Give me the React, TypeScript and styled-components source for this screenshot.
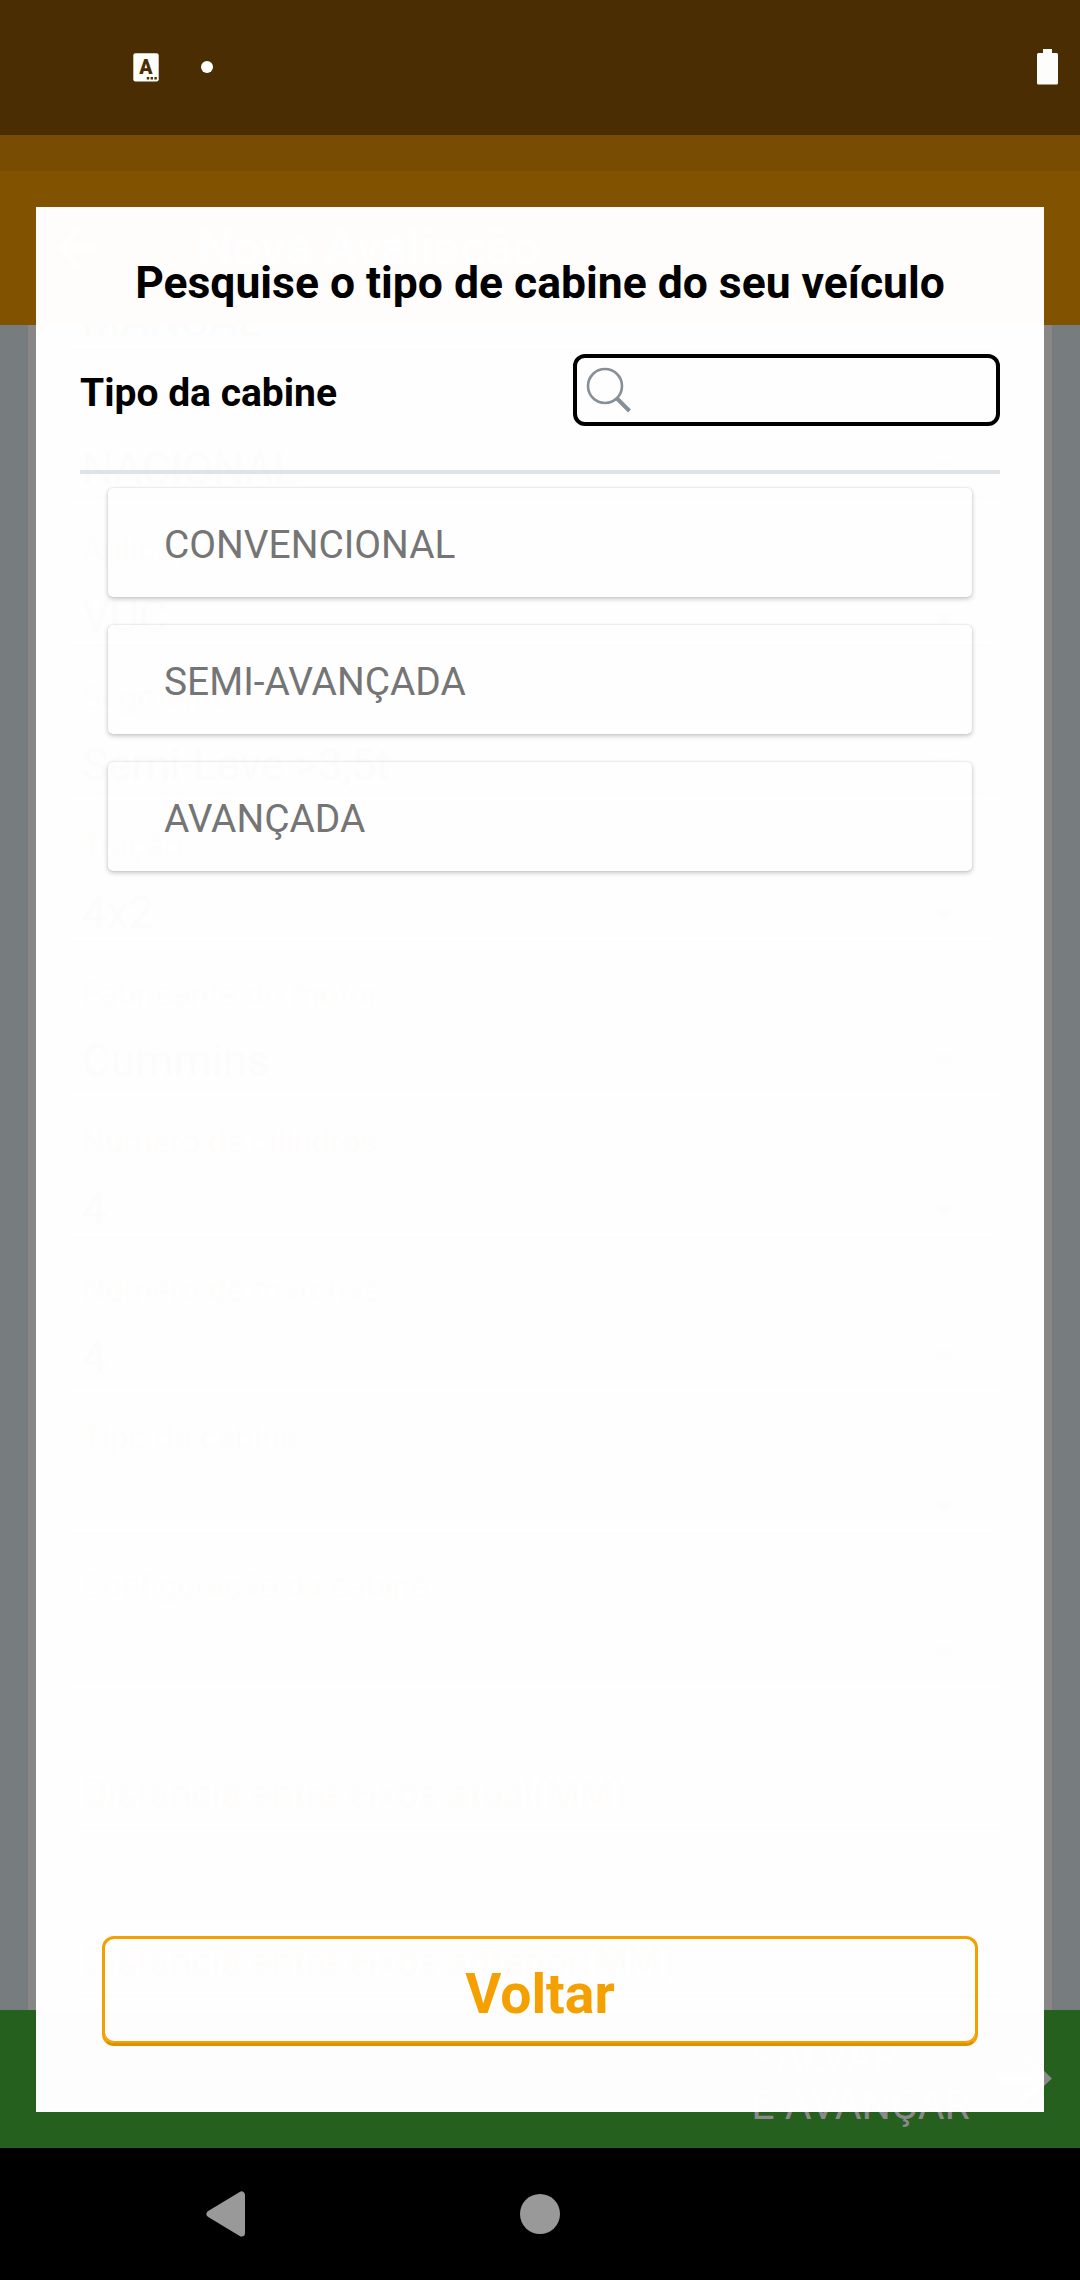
import React from 'react';
import styled, { createGlobalStyle } from 'styled-components';

const GlobalStyle = createGlobalStyle`
  *, *::before, *::after { box-sizing: border-box; }
  body { margin: 0; background: #000; font-family: Roboto, "Liberation Sans", sans-serif; }
`;

const Screen = styled.div`
  position: relative;
  width: 1080px;
  height: 2280px;
  overflow: hidden;
  display: flex;
  flex-direction: column;
  background: #777c7f;
`;

const StatusBar = styled.header`
  height: 135px;
  flex: none;
  display: flex;
  align-items: center;
  padding: 0 22px 1px 133px;
  background: #4a2d03;
`;

const StatusDot = styled.span`
  width: 12px;
  height: 12px;
  margin: 0 auto 0 42px;
  border-radius: 50%;
  background: #fff;
`;

const ToolbarEdge = styled.div`
  height: 36px;
  flex: none;
  background: #784c03;
`;

const Toolbar = styled.div`
  height: 154px;
  flex: none;
  display: flex;
  align-items: center;
  gap: 98px;
  padding: 0 0 0 54px;
  background: #815300;
  color: #8a8a8a;
`;

const ToolbarTitle = styled.div`
  font-size: 49.5px;
  line-height: 56px;
  font-weight: 700;
`;

const FormCard = styled.div`
  flex: 1;
  min-height: 0;
  margin: 0 28px;
  padding: 0 55px 0 42px;
  overflow: hidden;
  background: #888786;
`;

const FormRow = styled.div<{ $height: number }>`
  height: ${p => p.$height}px;
  display: flex;
  flex-direction: column;
  justify-content: flex-end;
  overflow: hidden;
  padding: 0 40px 1px 12px;
  border-bottom: 3px solid #5f5f5f;
`;

const FormLabel = styled.div`
  font-size: 33px;
  line-height: 39px;
  margin-bottom: 22px;
  color: #8c6c35;
`;

const FormValue = styled.div`
  height: 52px;
  flex: none;
  display: flex;
  align-items: center;
  justify-content: space-between;
  font-size: 44px;
  line-height: 52px;
  color: #000;
`;

const MeasureRow = styled.div<{ $height: number }>`
  height: ${p => p.$height}px;
  display: flex;
  align-items: flex-end;
  margin: 0 -3px 0 11px;
  padding: 0 0 10px 1px;
  border-bottom: 3px solid #707070;
  font-size: 38.5px;
  line-height: 45px;
  color: #8c6c35;
`;

const NextBar = styled.div`
  height: 138px;
  flex: none;
  display: flex;
  align-items: center;
  justify-content: flex-end;
  gap: 27px;
  padding: 0 28px 0 0;
  background: #26601f;
  color: #8a8a8a;

  svg { margin-top: -2px; }
`;

const NextText = styled.div`
  font-size: 41.2px;
  line-height: 48px;
  padding-top: 4px;
`;

const NavBar = styled.nav`
  height: 132px;
  flex: none;
  display: flex;
  align-items: center;
  padding: 0 0 0 206px;
  background: #000;
`;

const HomeKey = styled.span`
  width: 40px;
  height: 40px;
  margin-left: 275px;
  border-radius: 50%;
  background: #999;
`;

const Dialog = styled.section`
  position: absolute;
  inset: 207px 36px 168px;
  display: flex;
  flex-direction: column;
  padding: 50px 44px 66px;
  background: rgba(255, 255, 255, 0.988);
`;

const Title = styled.h1`
  margin: 0 0 45px;
  font-size: 44.45px;
  line-height: 52px;
  font-weight: 700;
  text-align: center;
  white-space: nowrap;
  color: #000;
`;

const SearchRow = styled.div`
  height: 72px;
  display: flex;
  align-items: center;
  justify-content: space-between;
`;

const SearchLabel = styled.label`
  padding-top: 7px;
  font-size: 39px;
  line-height: 45px;
  font-weight: 700;
  color: #000;
`;

const SearchBox = styled.div`
  width: 427px;
  height: 72px;
  display: flex;
  align-items: center;
  padding: 0 10px 0 9px;
  border: 4px solid #000;
  border-radius: 12px;
`;

const Divider = styled.hr`
  width: 100%;
  height: 4px;
  margin: 44px 0 14px;
  border: 0;
  background: #dfe3e6;
`;

const Options = styled.ul`
  flex: 1;
  margin: 0;
  padding: 0 28px;
  display: flex;
  flex-direction: column;
  gap: 28px;
  list-style: none;
`;

const Option = styled.li`
  height: 109px;
  display: flex;
  align-items: center;
  padding: 4px 56px 0;
  border-radius: 5px;
  box-shadow: 0 2px 5px rgba(0, 0, 0, 0.22), 0 0 2px rgba(0, 0, 0, 0.12);
  font-size: 38.9px;
  line-height: 45px;
  color: #757575;
`;

const BackButton = styled.button`
  height: 110px;
  margin: 0 22px;
  padding: 7px 0 0;
  display: flex;
  align-items: center;
  justify-content: center;
  border: 3px solid #f4a000;
  border-bottom-color: #de9100;
  border-radius: 12px;
  box-shadow: inset 0 -2px 0 #f4a000;
  background: transparent;
  font-family: inherit;
  font-size: 55.3px;
  line-height: 64px;
  font-weight: 700;
  color: #f4a000;
`;

const rows = [
  { label: 'Procedência', value: 'NACIONAL' },
  { label: 'Aplicação', value: 'VUC' },
  { label: 'Segmento', value: 'Semi-Leve >3,5t' },
  { label: 'Tração', value: '4x2' },
  { label: 'Fabricante do motor', value: 'Cummins' },
  { label: 'Número de cilindros', value: '4' },
  { label: 'Número de marchas', value: '4' },
  { label: 'Tipo da cabine', value: '' },
  { label: 'Configuração da cabine', value: '' },
];

const options = ['CONVENCIONAL', 'SEMI-AVANÇADA', 'AVANÇADA'];

const KeyboardIcon = () => (
  <svg width="26" height="29" viewBox="0 0 26 29">
    <rect x="0.3" y="0.3" width="25.4" height="28.2" rx="2.2" fill="#fdfdfb" />
    <text x="13" y="20.6" textAnchor="middle" fontFamily="Roboto" fontWeight="900" fontSize="19.5" fill="#4a2d03">A</text>
    <path d="M13.8 24h2.4v2.4h-2.4zM17.6 24H20v2.4h-2.4zM21.4 24h2.4v2.4h-2.4z" fill="#4a2d03" />
  </svg>
);

const BatteryIcon = () => (
  <svg width="21" height="36" viewBox="0 0 21 36">
    <path d="M6 0h9v4h4.5A1.5 1.5 0 0 1 21 5.500V34a1.500 1.500 0 0 1-1.500 1.500h-18A1.500 1.500 0 0 1 0 34V5.500A1.500 1.500 0 0 1 1.500 4H6z" fill="#fdfdfb" />
  </svg>
);

const ArrowLeft = () => (
  <svg width="46" height="46" viewBox="0 0 46 46" fill="none" stroke="currentColor" strokeWidth="5">
    <path d="M45 23H5M24 4L5 23l19 19" />
  </svg>
);

const ArrowRight = () => (
  <svg width="55" height="54" viewBox="0 0 55 54" fill="none" stroke="currentColor" strokeWidth="7.500">
    <path d="M0 27h49M24.500 3L49.500 27.500 24.500 51" />
  </svg>
);

const Caret = () => (
  <svg width="26" height="14" viewBox="0 0 26 14">
    <path d="M0 0h26L13 14z" fill="#555" />
  </svg>
);

const SearchIcon = () => (
  <svg width="46" height="46" viewBox="0 0 46 46" fill="none" stroke="#879097">
    <circle cx="19" cy="19" r="17" strokeWidth="2.600" />
    <path d="M31 31.500L43.500 44" strokeWidth="4" />
  </svg>
);

const BackKey = () => (
  <svg width="39" height="46" viewBox="0 0 39 46">
    <path d="M4 23L35.500 4v38z" fill="#999" stroke="#999" strokeWidth="7" strokeLinejoin="round" />
  </svg>
);

export default function App() {
  return (
    <>
      <GlobalStyle />
      <Screen>
        <StatusBar>
          <KeyboardIcon />
          <StatusDot />
          <BatteryIcon />
        </StatusBar>
        <ToolbarEdge />
        <Toolbar>
          <ArrowLeft />
          <ToolbarTitle>Nova Avaliação</ToolbarTitle>
        </Toolbar>
        <FormCard>
          <FormRow $height={26}>
            <FormValue>MANUAL</FormValue>
          </FormRow>
          {rows.map(row => (
            <FormRow key={row.label} $height={148}>
              <FormLabel>{row.label}</FormLabel>
              <FormValue>
                <span>{row.value}</span>
                <Caret />
              </FormValue>
            </FormRow>
          ))}
          <MeasureRow $height={146}>Distância entre eixos atual(MM)</MeasureRow>
          <MeasureRow $height={168}>Distância entre eixos anterior(MM)</MeasureRow>
        </FormCard>
        <NextBar>
          <NextText>
            SALVAR
            <br />E AVANÇAR
          </NextText>
          <ArrowRight />
        </NextBar>
        <NavBar>
          <BackKey />
          <HomeKey />
        </NavBar>
        <Dialog>
          <Title>Pesquise o tipo de cabine do seu veículo</Title>
          <SearchRow>
            <SearchLabel>Tipo da cabine</SearchLabel>
            <SearchBox>
              <SearchIcon />
            </SearchBox>
          </SearchRow>
          <Divider />
          <Options>
            {options.map(name => (
              <Option key={name}>{name}</Option>
            ))}
          </Options>
          <BackButton>Voltar</BackButton>
        </Dialog>
      </Screen>
    </>
  );
}
